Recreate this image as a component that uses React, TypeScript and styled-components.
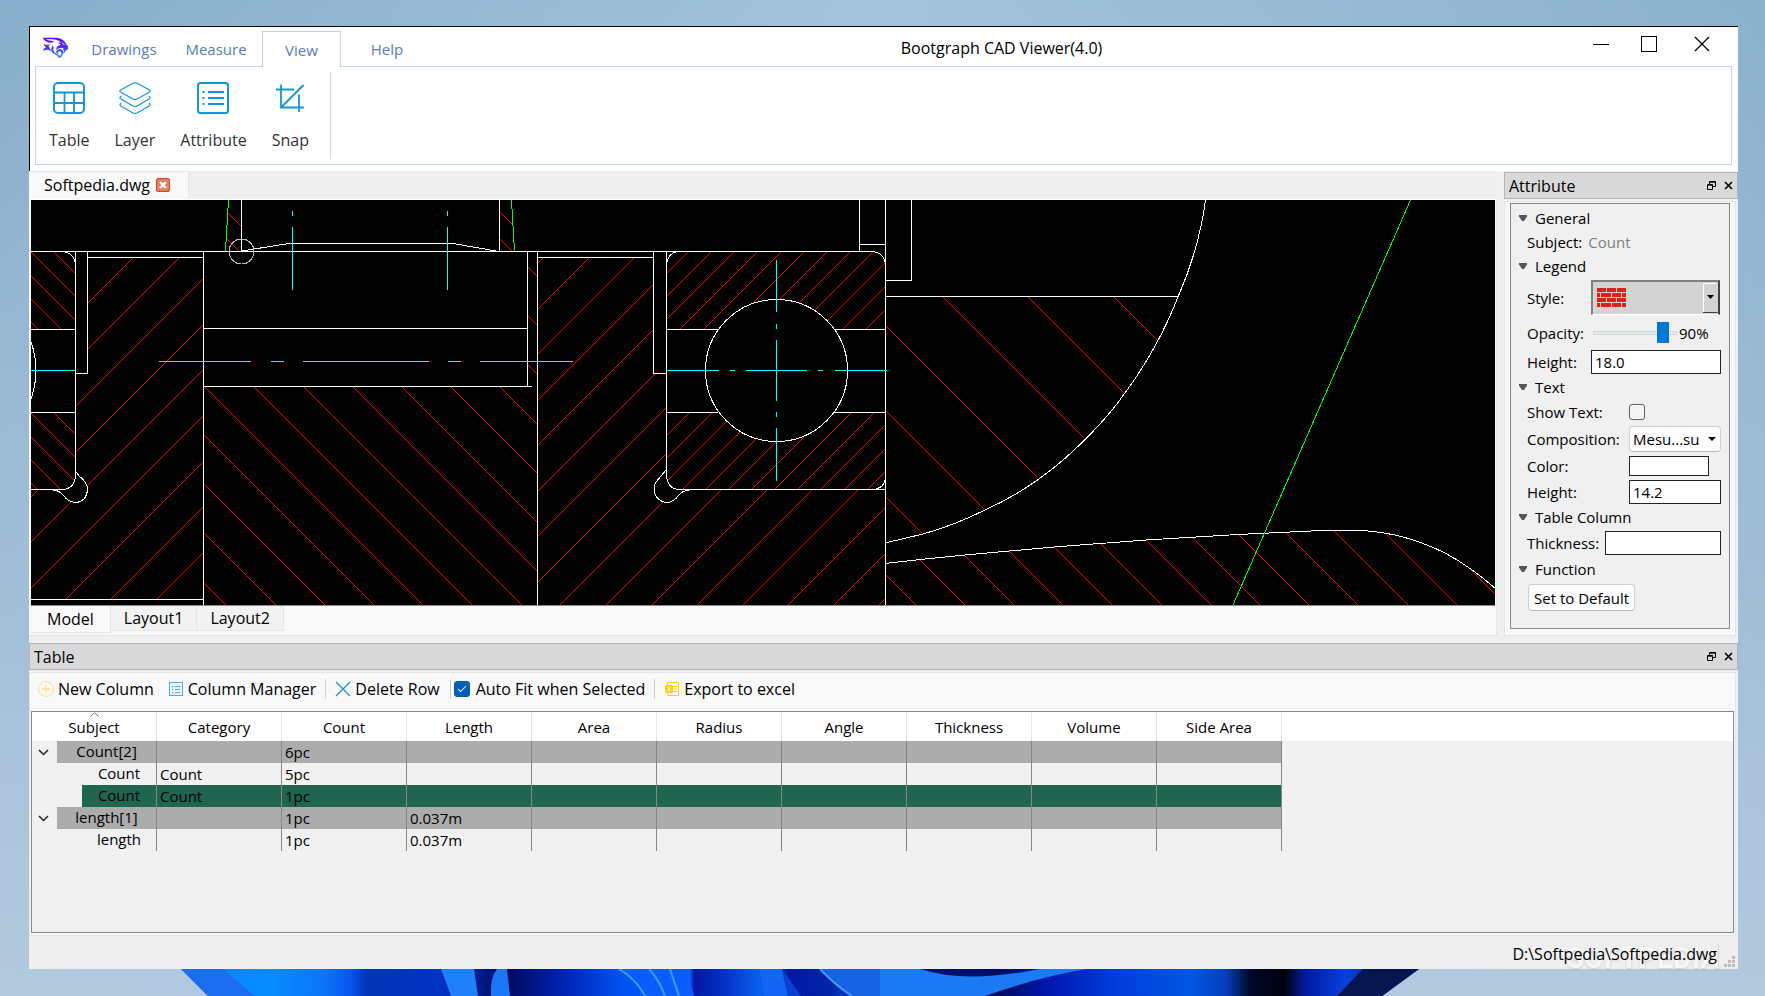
import React, { useState } from 'react';
import styled, { createGlobalStyle, css } from 'styled-components';

const GlobalStyle = createGlobalStyle`
  *, *::before, *::after { box-sizing: border-box; }
  body { margin: 0; }
  body, button, input, select, table {
    font-family: 'Open Sans', 'Noto Sans', sans-serif;
    font-size: 15px;
    line-height: 20px;
    color: #000;
  }
  button { margin: 0; padding: 0; border: 0; background: none; }
`;

/* ---------- desktop ---------- */

const Desktop = styled.div`
  position: relative;
  min-height: 100vh;
  display: flex;
  padding: 26px 27px 27px 29px;
  background: linear-gradient(100deg, rgba(160, 192, 216, 0) 0%, rgba(175, 204, 225, 0.7) 45%, rgba(150, 182, 208, 0) 100%),
    linear-gradient(180deg, #86aecb 0%, #9ab9d3 45%, #b3c9de 100%);
`;

const Wallpaper = styled.svg`
  position: absolute;
  left: 0;
  bottom: 0;
  width: 100%;
  height: 27px;
`;

const Window = styled.main`
  position: relative;
  flex: 1;
  min-width: 0;
  display: flex;
  flex-direction: column;
  background: #f0f0f0;
`;

/* ---------- ribbon ---------- */

const Ribbon = styled.header`
  background: #fff;
  border-top: 1px solid #000;
  border-left: 1px solid #000;
  padding: 0 6px 6px 5px;
`;

const TitleRow = styled.div`
  display: flex;
  align-items: flex-end;
  height: 39px;
`;

const Logo = styled.svg`
  width: 28px;
  height: 22px;
  margin: 0 8px 7px 7px;
`;

const RibbonTabs = styled.nav`
  display: flex;
  align-items: flex-end;
`;

const RibbonTab = styled.button<{ $active?: boolean }>`
  position: relative;
  width: ${p => (p.$active ? 79 : 92)}px;
  height: 35px;
  color: #5a7cb5;
  ${p =>
    p.$active &&
    css`
      height: 36px;
      margin-bottom: -1px;
      background: #fff;
      border: 1px solid #c3d2e2;
      border-bottom: 0;
    `}
`;

const WindowTitle = styled.h1`
  flex: 1;
  margin: 0;
  padding-bottom: 8px;
  font-size: 16px;
  font-weight: 400;
  text-align: center;
`;

const WindowControls = styled.div`
  display: flex;
  align-self: flex-start;
  margin: 0 1px 0 7px;
`;

const WindowButton = styled.button`
  display: grid;
  place-items: center;
  width: 48px;
  height: 34px;
  &:last-child { width: 58px; }
  svg { width: 16px; height: 16px; }
`;

const RibbonPanel = styled.div`
  display: flex;
  height: 99px;
  padding: 5px 13px;
  border: 1px solid #c3d2e2;
`;

const RibbonGroup = styled.div`
  display: flex;
  gap: 25px;
  padding: 10px 21px 0 0;
  height: 87px;
  border-right: 1px solid #dcdcdc;
`;

const ToolButton = styled.button`
  display: flex;
  flex-direction: column;
  align-items: center;
  gap: 16px;
  font-size: 16px;
  color: #333;
  svg { width: 32px; height: 32px; }
`;

/* ---------- workspace ---------- */

const Workspace = styled.div`
  display: grid;
  grid-template-columns: minmax(0, 1fr) 234px;
  gap: 7px;
`;

const DocumentArea = styled.section`
  display: flex;
  flex-direction: column;
  height: 465px;
  padding: 0 1px;
  border-right: 1px solid #e5e5e5;
  border-bottom: 1px solid #e5e5e5;
  background: #f9f9f9;
`;

const DocumentTabs = styled.div`
  display: flex;
  height: 29px;
  margin-right: -2px;
  background: #efefef;
  border-bottom: 1px solid #fff;
`;

const DocumentTab = styled.div`
  display: flex;
  align-items: center;
  gap: 6px;
  padding: 0 18px 2px 14px;
  border: 1px solid #e5e5e5;
  border-left: 0;
  border-bottom: 0;
  background: #f9f9f9;
  font-size: 16px;
`;

const CloseTab = styled.button`
  display: flex;
  svg { width: 14px; height: 14px; }
`;

const DrawingFrame = styled.div`
  height: 406px;
  margin-left: 1px;
  background: #000;
  border-bottom: 1px solid #8a8a8a;
  svg { display: block; width: 100%; height: 405px; }
`;

const LayoutTabs = styled.div`
  display: flex;
  align-items: flex-start;
  margin-left: 1px;
`;

const LayoutTab = styled.button<{ $active?: boolean }>`
  height: ${p => (p.$active ? 27 : 25)}px;
  padding: 0 ${p => (p.$active ? 16 : 13)}px;
  border: 1px solid #e5e5e5;
  border-top: 0;
  border-left: 0;
  background: ${p => (p.$active ? '#f9f9f9' : '#f2f2f2')};
  font-size: 16px;
`;

/* ---------- docks ---------- */

const Dock = styled.section<{ $fill?: boolean }>`
  display: flex;
  flex-direction: column;
  ${p => p.$fill && 'flex: 1; margin-top: 7px;'}
`;

const DockTitle = styled.header`
  display: flex;
  align-items: center;
  height: 27px;
  padding: 0 0 0 4px;
  background: #d9d9d9;
  border: 1px solid #b4b4b4;
  h2 { flex: 1; margin: 0; font-size: 16px; font-weight: 400; }
`;

const DockButton = styled.button`
  display: grid;
  place-items: center;
  width: 17px;
  height: 17px;
  svg { width: 9px; height: 9px; }
`;

const DockBody = styled.div`
  display: flex;
  flex-direction: column;
  flex: 1;
  margin: 2px 2px 0 0;
  padding: 1px 5px 6px;
  border: 1px solid #e5e5e5;
  background: #f9f9f9;
`;

const AttributeDock = styled(Dock)`
  padding-top: 1px;
`;

const AttributeForm = styled.form`
  flex: 1;
  padding: 2px 8px 0 8px;
  border: 1px solid #828790;
  background: #f0f0f0;
`;

const GroupHeading = styled.h3`
  display: flex;
  align-items: center;
  gap: 8px;
  height: 24px;
  margin: 0;
  font-size: 15px;
  font-weight: 400;
  svg { width: 8px; height: 6px; }
`;

const Field = styled.div<{ $h?: number }>`
  display: flex;
  align-items: center;
  justify-content: space-between;
  height: ${p => p.$h ?? 26}px;
  padding-left: 8px;
  white-space: nowrap;
`;

const Muted = styled.output`
  flex: 1;
  padding-left: 6px;
  color: #808080;
`;

const TextBox = styled.input<{ $w: number }>`
  width: ${p => p.$w}px;
  height: 24px;
  padding: 0 3px;
  border: 1px solid #222;
  background: #fff;
`;

const ColorBox = styled.button`
  width: 80px;
  height: 20px;
  margin-right: 12px;
  border: 1px solid #222;
  background: #fff;
`;

const StylePicker = styled.div`
  position: relative;
  width: 129px;
  height: 35px;
  margin-right: 1px;
  select {
    appearance: none;
    width: 100%;
    height: 100%;
    border: 2px solid;
    border-color: #808080 #404040 #404040 #808080;
    border-bottom: 1px solid #fff;
    border-radius: 0;
    background: #d3d3d3;
  }
`;

const PickerArt = styled.svg`
  position: absolute;
  left: 0;
  top: 0;
  width: 129px;
  height: 35px;
  pointer-events: none;
`;

const OpacityControl = styled.div`
  display: flex;
  align-items: center;
  gap: 2px;
  width: 130px;
  padding-left: 2px;
  input {
    appearance: none;
    width: 84px;
    height: 22px;
    margin: 0;
    background: transparent;
  }
  input::-webkit-slider-runnable-track {
    height: 4px;
    border: 1px solid #d4d7d7;
    background: #e7eaea;
  }
  input::-webkit-slider-thumb {
    appearance: none;
    width: 12px;
    height: 21px;
    margin-top: -10px;
    background: #0078d7;
  }
`;

const CheckSlot = styled.div`
  display: flex;
  width: 92px;
`;

const CheckBox = styled.input`
  appearance: none;
  display: grid;
  place-items: center;
  width: 16px;
  height: 16px;
  margin: 0;
  border: 1px solid #626262;
  border-radius: 3px;
  background: #f5f5f5;
  &:checked { border-color: #005fb8; background: #005fb8; }
  &:checked::before {
    content: '';
    width: 8px;
    height: 4px;
    margin-top: -2px;
    border-left: 1px solid #fff;
    border-bottom: 1px solid #fff;
    transform: rotate(-45deg);
  }
`;

const ComposeBox = styled.div`
  position: relative;
  width: 92px;
  height: 26px;
  select {
    appearance: none;
    width: 100%;
    height: 100%;
    padding: 0 0 0 3px;
    border: 1px solid #d0d0d0;
    border-bottom-color: #bbb;
    border-radius: 4px;
    background: #fdfdfd;
  }
  svg {
    position: absolute;
    right: 5px;
    top: 11px;
    width: 8px;
    height: 4px;
    pointer-events: none;
  }
`;

const DefaultButton = styled.button`
  height: 27px;
  margin: 3px 0 0 9px;
  padding: 0 5px;
  border: 1px solid #d0d0d0;
  border-bottom-color: #bbb;
  border-radius: 4px;
  background: #fdfdfd;
`;

/* ---------- table dock ---------- */

const TableBody = styled(DockBody)`
  padding: 0 1px 2px;
`;

const TableToolbar = styled.div`
  display: flex;
  align-items: center;
  height: 38px;
  padding: 0 7px 6px;
  font-size: 16px;
`;

const ToolbarAction = styled.button<{ $after?: number }>`
  display: flex;
  align-items: center;
  gap: 4px;
  margin-right: ${p => p.$after ?? 0}px;
  font-size: 16px;
  svg { width: 16px; height: 16px; }
`;

const AutoFit = styled.label`
  display: flex;
  align-items: center;
  gap: 6px;
  margin-right: 9px;
`;

const Divider = styled.span<{ $after: number }>`
  width: 1px;
  height: 20px;
  margin-right: ${p => p.$after}px;
  background: #cfcfcf;
`;

const GridFrame = styled.div`
  flex: 1;
  min-height: 222px;
  border: 1px solid #828790;
  background: #f1f1f1;
  overflow: hidden;
`;

const Grid = styled.table`
  width: 100%;
  table-layout: fixed;
  border-spacing: 0;
  col.data { width: 125px; }
`;

const HeadCell = styled.th`
  position: relative;
  height: 29px;
  padding: 0;
  border-right: 1px solid #e5e5e5;
  background: #fff;
  font-weight: 400;
  text-align: center;
  &:last-child { border-right: 0; }
  svg { position: absolute; left: 58px; top: 0; width: 9px; height: 5px; }
`;

type Tone = 'group' | 'plain' | 'selected';
const tones: Record<Tone, string> = { group: '#acacac', plain: 'transparent', selected: '#1f6550' };

const Cell = styled.td<{ $tone: Tone }>`
  height: 22px;
  padding: 0 0 0 3px;
  border-right: 1px solid #868686;
  background: ${p => tones[p.$tone]};
  line-height: 22px;
`;

const SubjectCell = styled.td`
  height: 22px;
  padding: 0;
  border-right: 1px solid #868686;
`;

const SubjectInner = styled.div`
  display: flex;
  height: 22px;
`;

const Expander = styled.button`
  display: grid;
  place-items: center;
  width: 25px;
  padding-right: 2px;
  svg { width: 11px; height: 7px; }
`;

const Indent = styled.span`
  width: 50px;
`;

const SubjectLabel = styled.span<{ $tone: Tone }>`
  flex: 1;
  text-align: center;
  line-height: 21px;
  background: ${p => tones[p.$tone]};
`;

/* ---------- status bar ---------- */

const StatusBar = styled.footer`
  position: relative;
  display: flex;
  align-items: center;
  justify-content: flex-end;
  height: 33px;
  padding: 3px 21px 0 0;
  background: #efefef;
  font-size: 16px;
`;

const FilePath = styled.span`
  position: relative;
`;

const Watermark = styled.svg`
  position: absolute;
  right: 0;
  bottom: 0;
  width: 180px;
  height: 30px;
  overflow: visible;
  text { filter: drop-shadow(0 1px 1px rgba(0, 0, 0, 0.15)); }
`;

/* ---------- drawing ---------- */

type HatchProps = { dir: 1 | -1; from: number; step: number; count: number; clip: string };

/* Diagonal hatch: dir 1 runs down to the right (y - x = c), dir -1 up to the right (x + y = c). */
const Hatch = ({ dir, from, step, count, clip }: HatchProps) => (
  <g clipPath={`url(#${clip})`} stroke="#f00">
    {Array.from({ length: count }, (_, i) => {
      const c = Math.round(from + step * i);
      return dir === 1
        ? <line key={i} x1={190 - c} y1={190} x2={620 - c} y2={620} />
        : <line key={i} x1={c - 190} y1={190} x2={c - 620} y2={620} />;
    })}
  </g>
);

const lowerEdge = 'M885 563.5L925 559L965 555L1054 547L1146 540L1238 534.5L1315 530.8L1340 530L1366 530.8Q1382 532 1398 535.6Q1423 542 1445 553Q1471 567 1496 589';

const Drawing = () => (
  <svg viewBox="31 200 1464 405" preserveAspectRatio="xMinYMin slice" shapeRendering="crispEdges" fill="none" role="img" aria-label="Section drawing">
    <defs>
      <clipPath id="ringTop"><path d="M31 251H63Q75 252 75 264V329H31Z" /></clipPath>
      <clipPath id="ringLow"><path d="M31 412H75V477Q74 488 64 489H31Z" /></clipPath>
      <clipPath id="sleeve"><path d="M88 258H203V599H31V490H54Q60 492 64 498Q70 503 76 503Q88 501 88 489Q87 479 76 474V374H88Z" /></clipPath>
      <clipPath id="shaft"><path d="M527 252H537V605H204V387H527Z" /></clipPath>
      <clipPath id="housing"><path d="M538 258H653V374H666V472L655 484Q653 492 657 498Q662 503 668 502Q676 500 682 490H885V605H538Z" /></clipPath>
      <clipPath id="bearing"><rect x="667" y="252" width="218" height="237" rx="12" /></clipPath>
      <clipPath id="disc"><path d="M886 297H1178A399 399 0 0 1 886 543Z" /></clipPath>
      <clipPath id="base"><path d={lowerEdge + 'V605H886Z'} /></clipPath>
      <clipPath id="lipLeft"><path d="M228 200H241V251H225Z" /></clipPath>
      <clipPath id="lipRight"><path d="M500 200H512L514 251H500Z" /></clipPath>
    </defs>

    <Hatch dir={1} from={198} step={23.3} count={5} clip="ringTop" />
    <Hatch dir={1} from={359} step={23.3} count={5} clip="ringLow" />
    <Hatch dir={-1} from={391} step={45.6} count={10} clip="sleeve" />
    <Hatch dir={1} from={-261} step={49.2} count={14} clip="shaft" />
    <Hatch dir={-1} from={801} step={45.55} count={16} clip="housing" />
    <Hatch dir={-1} from={940} step={23.15} count={20} clip="bearing" />
    <Hatch dir={1} from={-817} step={85.6} count={6} clip="disc" />
    <Hatch dir={1} from={-901} step={49.2} count={13} clip="base" />
    <Hatch dir={1} from={-15} step={27} count={2} clip="lipLeft" />
    <Hatch dir={1} from={-288} step={27} count={2} clip="lipRight" />

    <rect x="667" y="330" width="218" height="82" fill="#000" />
    <circle cx="776.5" cy="370.5" r="71" fill="#000" />

    <g stroke="#fff">
      <path d="M31 251.5H873M63 251.5Q74 253 75.5 264M75.5 251V477Q74 488 64 489.5H31M87.5 251V373.5H75" />
      <path d="M87 257.5H203.5V605M203.5 251V258M31 329.5H75M31 412.5H75M31 599.5H203" />
      <path d="M31 342Q41 370 31 399" />
      <path d="M75.5 471L79 476Q87.5 482 87.5 490Q86 502 75.5 502.5Q68 502 64 496Q59 490 53 490" />
      <path d="M241.5 200V251L289 243.5H453L499 251.5M499.5 200V251" />
      <path d="M204 328.5H527M204 386.5H532M527.5 251V386M537.5 251V605M537 257.5H653M653.5 251V373.5H666" />
      <path d="M666.5 251V475Q667 488 678 489.5H885M666.5 264Q668 253 678 251.5M873 251.5Q884 253 885.5 264M876 489Q884 487 885.5 479" />
      <path d="M666 329.5H718M834 329.5H885M666 412.5H718M834 412.5H885" />
      <path d="M666 470L656 482Q653 486 654.5 493Q658 502 667 502.5Q674 502 678 496Q683 490 689 490.5" />
      <circle cx="776.5" cy="370.5" r="71" />
      <path d="M885.5 200V605M859.5 200V251M859 244.5H885M911.5 200V280.5H885M885 296.5H1178" />
      <path d="M1205.5 200Q1199 249 1178 297Q1158 348 1125 393Q1108 417 1085.5 439Q1064 461 1039 479Q1012 498 985 510Q955 525 923 534L885 543" />
      <path d={lowerEdge} />
    </g>
    <circle cx="241.5" cy="251.5" r="12.5" stroke="#bdbdbd" />
    <path stroke="#0f0" d="M228.5 200L225.5 251M511.5 200L514.5 251M1410.5 200L1233 605" />
    <g stroke="#0ff">
      <path d="M292.5 211V216M292.5 227V290M447.5 211V216M447.5 227V290" />
      <path d="M159 361.5H251M271 361.5H284M303 361.5H429M448 361.5H461M480 361.5H573" />
      <path d="M31 370.5H75M667 370.5H719M730 370.5H735M746 370.5H807M818 370.5H823M835 370.5H887" />
      <path d="M776.5 260V312M776.5 324V329M776.5 340V401M776.5 412V417M776.5 428V481" />
    </g>
  </svg>
);

/* ---------- icons ---------- */

const CloseGlyph = () => (
  <svg viewBox="0 0 9 9"><path d="M1 1L8 8M8 1L1 8" stroke="#000" strokeWidth="1.6" /></svg>
);

const FloatGlyph = () => (
  <svg viewBox="0 0 9 9" fill="none" stroke="#000"><path d="M2.5 3V.5H8.5V5.5H6M2 1.2H9M.5 3.5H5.5V8.5H.5ZM0 4.2H6" /></svg>
);

const DockHeader = ({ title }: { title: string }) => (
  <DockTitle>
    <h2>{title}</h2>
    <DockButton aria-label={`Float ${title}`}><FloatGlyph /></DockButton>
    <DockButton aria-label={`Close ${title}`}><CloseGlyph /></DockButton>
  </DockTitle>
);

const LogoMark = () => (
  <Logo viewBox="126 112 84 66" aria-hidden="true">
    <defs>
      <linearGradient id="logoFill" x1="0" y1="0" x2="0" y2="1">
        <stop offset="0" stopColor="#6a00f5" />
        <stop offset="0.5" stopColor="#4a35f8" />
        <stop offset="1" stopColor="#2a8cf5" />
      </linearGradient>
    </defs>
    <path
      fill="url(#logoFill)"
      d="M128 114H166Q184 115 193 125Q197 132 204 140V148L196 154L192 161L190 146Q182 144 176 146L169 151Q167 144 173 139L183 135L174 130Q176 127 183 129L178 124Q168 118 152 119L137 119Q142 123 153 123L165 126Q156 129 148 129Q134 126 128 114Z
      M130 132Q140 138 152 134L146 139L155 157Q146 149 138 151L128 153Q130 147 138 142Q132 139 130 132Z
      M158 136L161 145Q157 153 166 160L180 168L181 174L176 174Q173 167 163 163Q152 157 154 147Z
      M169 153Q178 144 187 151L191 159L184 172Q182 175 179 174L185 160Q182 152 174 156L176 163L169 160Z"
    />
    <path d="M185 126L196 136L189 134Z" fill="#fff" />
  </Logo>
);

const blue = '#1296db';

const TableIcon = () => (
  <svg viewBox="0 0 32 32" fill="none" stroke={blue} strokeWidth="2">
    <rect x="1" y="1" width="30" height="30" rx="4" />
    <path d="M1 10.5H31M1 21H31M11.5 10.5V31M21 10.5V31" strokeWidth="1.8" />
  </svg>
);

const LayerIcon = () => (
  <svg viewBox="0 0 32 32" fill="none" stroke={blue} strokeWidth="1.2" strokeLinejoin="round" strokeLinecap="round">
    <path d="M14.5 1Q16 .3 17.5 1L30.500 8Q32 9 30.500 10L18 17Q16 18 14 17L1.500 10Q0 9 1.500 8Z" />
    <path d="M1.800 14.500Q.3 15.800 1.500 16.800L14 24Q16 25 18 24L30.500 16.800Q31.700 15.800 30.200 14.500" />
    <path d="M1.800 21.500Q.3 22.800 1.500 23.800L14 31Q16 32 18 31L30.500 23.800Q31.700 22.800 30.200 21.500" />
  </svg>
);

const AttributeIcon = () => (
  <svg viewBox="0 0 32 32" fill="none" stroke={blue} strokeWidth="2">
    <rect x="1" y="1" width="30" height="30" rx="2.5" />
    <path d="M11 10H27M11 16H27M11 22H27M5.5 10H7.5M5.5 16H7.5M5.5 22H7.5" strokeWidth="1.8" />
  </svg>
);

const SnapIcon = () => (
  <svg viewBox="0 0 32 32" fill="none" stroke={blue} strokeWidth="1.8">
    <path d="M2 7.500H20M7 2.500V25.500H30M25 12.500V30M7 25.500L29.500 3" />
  </svg>
);

const Triangle = () => (
  <svg viewBox="0 0 8 6"><path d="M0 0H8V1.500L5 6H3L0 1.500Z" fill="#555" /></svg>
);

const Chevron = () => (
  <svg viewBox="0 0 11 7" fill="none" stroke="#222" strokeWidth="1.5"><path d="M1 1L5.500 5.500L10 1" /></svg>
);

const bricks = [
  [0, 0, 9], [10, 0, 9], [20, 0, 9],
  [0, 5, 3], [4, 5, 10], [15, 5, 9], [25, 5, 4],
  [0, 10, 9], [10, 10, 9], [20, 10, 9],
  [0, 15, 3], [4, 15, 10], [15, 15, 9], [25, 15, 4],
];

/* ---------- data ---------- */

const columns = ['Subject', 'Category', 'Count', 'Length', 'Area', 'Radius', 'Angle', 'Thickness', 'Volume', 'Side Area'];

const rows: { tone: Tone; values: string[] }[] = [
  { tone: 'group', values: ['Count[2]', '', '6pc'] },
  { tone: 'plain', values: ['Count', 'Count', '5pc'] },
  { tone: 'selected', values: ['Count', 'Count', '1pc'] },
  { tone: 'group', values: ['length[1]', '', '1pc', '0.037m'] },
  { tone: 'plain', values: ['length', '', '1pc', '0.037m'] },
];

const bloomStops: [number, string][] = [
  [181, '#1670f5'], [225, '#0a85ff'], [270, '#078dff'], [325, '#0a74f8'], [350, '#0757ef'],
  [366, '#0236b8'], [440, '#0133c4'], [508, '#000a60'], [560, '#0020b0'], [620, '#0050f0'],
  [690, '#0a60ff'], [694, '#0018a0'], [730, '#0638cc'], [760, '#0860f0'], [790, '#0018a8'],
  [830, '#0024a8'], [880, '#1668ea'], [940, '#001070'], [1000, '#000c60'], [1050, '#0018b0'],
  [1110, '#003ad8'], [1190, '#0056e4'], [1225, '#0540c0'], [1250, '#010828'], [1285, '#00020f'],
  [1305, '#001aa0'], [1345, '#0840dc'], [1419, '#0a1c60'],
];

const Petals = () => (
  <Wallpaper viewBox="0 969 1765 27" preserveAspectRatio="none" aria-hidden="true">
    <defs>
      <linearGradient id="bloom" gradientUnits="userSpaceOnUse" x1="181" y1="0" x2="1419" y2="0">
        {bloomStops.map(([x, color]) => <stop key={x} offset={(x - 181) / 1238} stopColor={color} />)}
      </linearGradient>
    </defs>
    <path d="M181 969H1419L1382 996H208Z" fill="url(#bloom)" />
    <path d="M181 969H223L254 996H208Z" fill="#1c6cf0" />
    <path d="M441 969H474L478 996H451Z" fill="#1f80fb" />
    <path d="M491 996Q490 977 497 969H507L510 996Z" fill="#1a78f8" />
    <path d="M619 969H687L694 996H645Q636 979 619 969Z" fill="#0c5cff" />
    <path d="M619 969Q636 979 645 996M649 969Q660 981 665 996M670 969L679 996" fill="none" stroke="#3f9bff" strokeWidth="2" />
    <path d="M760 969H782L788 996H764Z" fill="#1565f5" />
    <path d="M782 969L801 996H788Z" fill="#0a40d0" />
    <path d="M820 969Q834 984 852 996H905V969Z" fill="#1562e2" />
    <path d="M820 969Q834 984 852 996" fill="none" stroke="#3f9bff" strokeWidth="2" />
    <path d="M880 969H920Q965 984 1040 969H1086Q1035 978 985 996H880Z" fill="#1c7af5" />
    <path d="M920 969Q945 975 965 969Z" fill="#001070" />
    <path d="M1363 969H1419L1382 996H1337Z" fill="#06154f" />
  </Wallpaper>
);

export default function App() {
  const [opacity, setOpacity] = useState(90);
  const [autoFit, setAutoFit] = useState(true);
  const [showText, setShowText] = useState(false);

  return (
    <>
      <GlobalStyle />
      <Desktop>
        <Petals />
        <Window>
          <Ribbon>
            <TitleRow>
              <LogoMark />
              <RibbonTabs>
                <RibbonTab>Drawings</RibbonTab>
                <RibbonTab>Measure</RibbonTab>
                <RibbonTab $active>View</RibbonTab>
                <RibbonTab>Help</RibbonTab>
              </RibbonTabs>
              <WindowTitle>Bootgraph CAD Viewer(4.0)</WindowTitle>
              <WindowControls>
                <WindowButton aria-label="Minimize">
                  <svg viewBox="0 0 16 16"><path d="M0 8.500H16" stroke="#000" /></svg>
                </WindowButton>
                <WindowButton aria-label="Maximize">
                  <svg viewBox="0 0 16 16"><rect x=".5" y=".5" width="15" height="15" fill="none" stroke="#000" /></svg>
                </WindowButton>
                <WindowButton aria-label="Close">
                  <svg viewBox="0 0 16 16"><path d="M1 1L15 15M15 1L1 15" stroke="#000" strokeWidth="1.3" /></svg>
                </WindowButton>
              </WindowControls>
            </TitleRow>
            <RibbonPanel>
              <RibbonGroup>
                <ToolButton><TableIcon />Table</ToolButton>
                <ToolButton><LayerIcon />Layer</ToolButton>
                <ToolButton><AttributeIcon />Attribute</ToolButton>
                <ToolButton><SnapIcon />Snap</ToolButton>
              </RibbonGroup>
            </RibbonPanel>
          </Ribbon>

          <Workspace>
            <DocumentArea>
              <DocumentTabs>
                <DocumentTab>
                  Softpedia.dwg
                  <CloseTab aria-label="Close Softpedia.dwg">
                    <svg viewBox="0 0 14 14">
                      <rect x=".5" y=".5" width="13" height="13" rx="1.5" fill="#e08060" stroke="#d8452c" />
                      <path d="M4 4L10 10M10 4L4 10" stroke="#fff" strokeWidth="2.4" />
                    </svg>
                  </CloseTab>
                </DocumentTab>
              </DocumentTabs>
              <DrawingFrame><Drawing /></DrawingFrame>
              <LayoutTabs>
                <LayoutTab $active>Model</LayoutTab>
                <LayoutTab>Layout1</LayoutTab>
                <LayoutTab>Layout2</LayoutTab>
              </LayoutTabs>
            </DocumentArea>

            <AttributeDock>
              <DockHeader title="Attribute" />
              <DockBody>
                <AttributeForm onSubmit={e => e.preventDefault()}>
                  <GroupHeading><Triangle />General</GroupHeading>
                  <Field $h={24}>
                    <label htmlFor="subject">Subject:</label>
                    <Muted id="subject">Count</Muted>
                  </Field>
                  <GroupHeading><Triangle />Legend</GroupHeading>
                  <Field $h={39}>
                    <label htmlFor="style">Style:</label>
                    <StylePicker>
                      <select id="style"><option value="brick" aria-label="Brick" /></select>
                      <PickerArt viewBox="0 0 129 35">
                        {bricks.map(([x, y, w]) => (
                          <rect key={`${x}-${y}`} x={6 + x} y={8 + y} width={w} height="4" fill="#e02010" />
                        ))}
                        <path d="M112.500 33V3.500H125" fill="none" stroke="#fff" />
                        <path d="M112 32.500H126.500" stroke="#404040" />
                        <path d="M116 15H123L119.500 19Z" fill="#000" />
                      </PickerArt>
                    </StylePicker>
                  </Field>
                  <Field $h={32}>
                    <label htmlFor="opacity">Opacity:</label>
                    <OpacityControl>
                      <input id="opacity" type="range" min="0" max="100" value={opacity} onChange={e => setOpacity(Number(e.target.value))} />
                      <span>{opacity}%</span>
                    </OpacityControl>
                  </Field>
                  <Field>
                    <label htmlFor="legendHeight">Height:</label>
                    <TextBox $w={130} id="legendHeight" defaultValue="18.0" />
                  </Field>
                  <GroupHeading><Triangle />Text</GroupHeading>
                  <Field>
                    <label htmlFor="showText">Show Text:</label>
                    <CheckSlot>
                      <CheckBox id="showText" type="checkbox" checked={showText} onChange={e => setShowText(e.target.checked)} />
                    </CheckSlot>
                  </Field>
                  <Field $h={28}>
                    <label htmlFor="composition">Composition:</label>
                    <ComposeBox>
                      <select id="composition"><option>Mesu...su</option></select>
                      <svg viewBox="0 0 8 4"><path d="M0 0H8L4 4Z" /></svg>
                    </ComposeBox>
                  </Field>
                  <Field>
                    <label htmlFor="color">Color:</label>
                    <ColorBox id="color" type="button" />
                  </Field>
                  <Field>
                    <label htmlFor="textHeight">Height:</label>
                    <TextBox $w={92} id="textHeight" defaultValue="14.2" />
                  </Field>
                  <GroupHeading><Triangle />Table Column</GroupHeading>
                  <Field $h={28}>
                    <label htmlFor="thickness">Thickness:</label>
                    <TextBox $w={116} id="thickness" />
                  </Field>
                  <GroupHeading><Triangle />Function</GroupHeading>
                  <DefaultButton type="button">Set to Default</DefaultButton>
                </AttributeForm>
              </DockBody>
            </AttributeDock>
          </Workspace>

          <Dock $fill>
            <DockHeader title="Table" />
            <TableBody>
              <TableToolbar>
                <ToolbarAction $after={14}>
                  <svg viewBox="0 0 16 16" fill="none" stroke="#fbe08a"><circle cx="8" cy="8" r="7.5" /><path d="M8 4V12M4 8H12" strokeWidth="1.3" /></svg>
                  New Column
                </ToolbarAction>
                <ToolbarAction $after={9}>
                  <svg viewBox="0 0 16 16" fill="none" stroke="#4aaee0"><rect x="1.5" y="1.5" width="13" height="13" fill="#e8f5fb" /><path d="M7 5.500H12M7 8.500H12M7 11.500H12M4 5.500H5.500M4 8.500H5.500M4 11.500H5.500" /></svg>
                  Column Manager
                </ToolbarAction>
                <Divider $after={9} />
                <ToolbarAction $after={10}>
                  <svg viewBox="0 0 16 16" fill="none" stroke="#1a8fd8" strokeWidth="1.3"><path d="M1 1L15 15M15 1L1 15" /></svg>
                  Delete Row
                </ToolbarAction>
                <Divider $after={3} />
                <AutoFit>
                  <CheckBox type="checkbox" checked={autoFit} onChange={e => setAutoFit(e.target.checked)} />
                  Auto Fit when Selected
                </AutoFit>
                <Divider $after={9} />
                <ToolbarAction>
                  <svg viewBox="0 0 16 16" fill="none" stroke="#fbcf1c"><path d="M3.500 4V1.500H14.500V14.500H3.500V12M9 5.500H13M9 8H13M9 10.500H13" /><rect x="1" y="4" width="8" height="8" rx="1" fill="#fbcf1c" stroke="none" /><path d="M3.500 6L6.500 10M6.500 6L3.500 10" stroke="#fff" /></svg>
                  Export to excel
                </ToolbarAction>
              </TableToolbar>
              <GridFrame>
                <Grid>
                  <colgroup>
                    {columns.map(c => <col key={c} className="data" />)}
                    <col />
                  </colgroup>
                  <thead>
                    <tr>
                      {columns.map((c, i) => (
                        <HeadCell key={c} scope="col">
                          {i === 0 && <svg viewBox="0 0 9 5" fill="none" stroke="#777"><path d="M.5 4.500L4.500 .7L8.500 4.500" /></svg>}
                          {c}
                        </HeadCell>
                      ))}
                      <HeadCell as="td" />
                    </tr>
                  </thead>
                  <tbody>
                    {rows.map(({ tone, values }, r) => (
                      <tr key={r}>
                        <SubjectCell>
                          <SubjectInner>
                            {tone === 'group' ? <Expander aria-label={`Collapse ${values[0]}`}><Chevron /></Expander> : <Indent />}
                            <SubjectLabel $tone={tone}>{values[0]}</SubjectLabel>
                          </SubjectInner>
                        </SubjectCell>
                        {columns.slice(1).map((c, i) => <Cell key={c} $tone={tone}>{values[i + 1] ?? ''}</Cell>)}
                      </tr>
                    ))}
                  </tbody>
                </Grid>
              </GridFrame>
            </TableBody>
          </Dock>

          <StatusBar>
            <Watermark viewBox="0 0 180 30" aria-hidden="true">
              <text x="8" y="29" fontFamily="Roboto, sans-serif" fontWeight="700" fontSize="29" fill="#f6f6f6">SOFTPEDIA</text>
              <path d="M174 17h3v3h-3zM174 21h3v3h-3zM170 21h3v3h-3zM174 25h3v3h-3zM170 25h3v3h-3zM166 25h3v3h-3z" fill="#bdbdbd" />
              <path d="M160.500 4V29" stroke="#dadada" />
            </Watermark>
            <FilePath>D:\Softpedia\Softpedia.dwg</FilePath>
          </StatusBar>
        </Window>
      </Desktop>
    </>
  );
}
